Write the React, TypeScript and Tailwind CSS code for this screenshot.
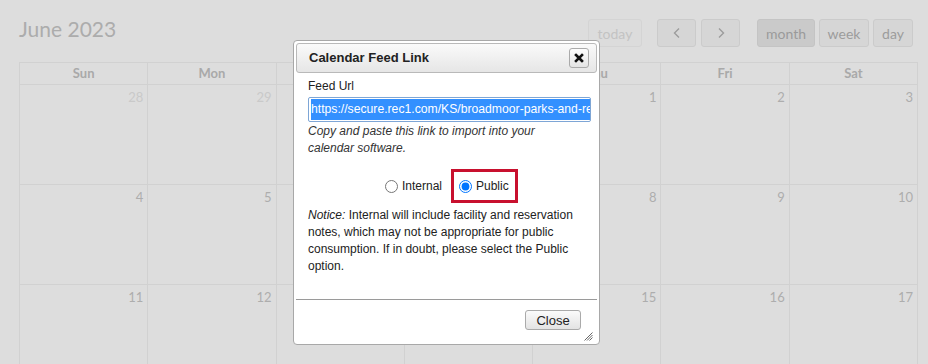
import React from 'react';

const weeks: { d: number; other?: boolean }[][] = [
  [{ d: 28, other: true }, { d: 29, other: true }, { d: 30, other: true }, { d: 31, other: true }, { d: 1 }, { d: 2 }, { d: 3 }],
  [4, 5, 6, 7, 8, 9, 10].map((d) => ({ d })),
  [11, 12, 13, 14, 15, 16, 17].map((d) => ({ d })),
];
const days = ['Sun', 'Mon', 'Tue', 'Wed', 'Thu', 'Fri', 'Sat'];

function Calendar() {
  return (
    <div className="pl-[19px] pr-[10px] pt-[19px] font-['Lato',sans-serif]">
      {/* Toolbar */}
      <div className="flex items-center h-[28px] mb-[15px]">
        <h2 className="text-[21px] leading-none text-[#acacac] -mt-[10px]">June 2023</h2>
        <div className="flex-1" />
        <button className="h-[28px] w-[54px] rounded-[3px] border border-[#d4d4d4] bg-[#dcdcdc] text-[14px] text-[#c3c3c3]">today</button>
        <div className="flex gap-[5px] ml-[15px]">
          <button className="h-[28px] w-[39px] rounded-[3px] border border-[#cbcbcb] bg-[#d6d6d6] text-[#9c9c9c] flex items-center justify-center">
            <svg width="10" height="12" viewBox="0 0 10 12" fill="none" stroke="currentColor" strokeWidth="1.4"><path d="M7 1.5 2.5 6 7 10.5" /></svg>
          </button>
          <button className="h-[28px] w-[39px] rounded-[3px] border border-[#cbcbcb] bg-[#d6d6d6] text-[#9c9c9c] flex items-center justify-center">
            <svg width="10" height="12" viewBox="0 0 10 12" fill="none" stroke="currentColor" strokeWidth="1.4"><path d="M3 1.5 7.5 6 3 10.5" /></svg>
          </button>
        </div>
        <div className="flex gap-[4px] ml-[17px] mr-[5px]">
          <button className="h-[28px] w-[58px] rounded-[3px] border border-[#c4c4c4] bg-[#cacaca] text-[14px] text-[#9a9a9a]">month</button>
          <button className="h-[28px] w-[50px] rounded-[3px] border border-[#cbcbcb] bg-[#d6d6d6] text-[14px] text-[#9c9c9c]">week</button>
          <button className="h-[28px] w-[40px] rounded-[3px] border border-[#cbcbcb] bg-[#d6d6d6] text-[14px] text-[#9c9c9c]">day</button>
        </div>
      </div>

      {/* Grid */}
      <div className="w-[899px] border-l border-t border-[#d1d1d1]">
        <div className="grid grid-cols-7 h-[22px]">
          {days.map((d) => (
            <div key={d} className="border-r border-b border-[#d1d1d1] text-center text-[13px] font-bold leading-[21px] text-[#a9a9a9]">{d}</div>
          ))}
        </div>
        {weeks.map((w, i) => (
          <div key={i} className="grid grid-cols-7 h-[100px]">
            {w.map(({ d, other }) => (
              <div key={d} className="border-r border-b border-[#d1d1d1] text-right pr-[4px] pt-[3px] text-[13px] leading-[18px]">
                <span className={other ? 'text-[#c9c9c9]' : 'text-[#adadad]'}>{d}</span>
              </div>
            ))}
          </div>
        ))}
      </div>
    </div>
  );
}

function FeedDialog() {
  return (
    <div className="absolute left-[293px] top-[40px] w-[307px] h-[305px] bg-white border border-[#a8a8a8] rounded-[4px] p-[2px] flex flex-col font-['Liberation_Sans',Arial,sans-serif] text-[#222]">
      {/* Title bar */}
      <div className="h-[30px] shrink-0 flex items-center pl-[12px] pr-[7px] rounded-[3px] border border-[#b9b9b9] bg-gradient-to-b from-[#fafafa] to-[#e6e6e6]">
        <span className="text-[13px] font-bold">Calendar Feed Link</span>
        <div className="flex-1" />
        <button className="w-[20px] h-[20px] rounded-[3px] border border-[#aaa] bg-gradient-to-b from-[#fdfdfd] to-[#e4e4e4] flex items-center justify-center">
          <svg width="10" height="10" viewBox="0 0 10 10" stroke="#111" strokeWidth="2.6" strokeLinecap="square"><path d="M2 2 8 8M8 2 2 8" /></svg>
        </button>
      </div>

      {/* Content */}
      <div className="h-[226px] shrink-0 pl-[12px] pr-[6px] pt-[5px] text-[12px] leading-[17px]">
        <div>Feed Url</div>
        <div className="mt-[2px] h-[25px] border border-[#7ea6d6] rounded-[2px] overflow-hidden whitespace-nowrap flex items-center pl-[2px]">
          <span className="bg-[#3390ff] text-white text-[12.2px] leading-[21px]">https://secure.rec1.com/KS/broadmoor-parks-and-recreation/calendar/feed</span>
        </div>
        <p className="mt-[1px] max-w-[262px] italic text-[#333]">Copy and paste this link to import into your calendar software.</p>
        <div className="mt-[12px] flex justify-center items-center pl-[4px]">
          <label className="flex items-center gap-[4px] mr-[9px]">
            <input type="radio" name="vis" className="m-0 w-[13px] h-[13px]" readOnly />
            <span>Internal</span>
          </label>
          <label className="h-[34px] w-[67px] border-[3px] border-[#c8102e] flex items-center pl-[5px] gap-[4px]">
            <input type="radio" name="vis" defaultChecked className="m-0 w-[13px] h-[13px]" />
            <span>Public</span>
          </label>
        </div>
        <p className="mt-[4px] text-[#222]">
          <i>Notice:</i> Internal will include facility and reservation notes, which may not be appropriate for public consumption. If in doubt, please select the Public option.
        </p>
      </div>

      {/* Button pane */}
      <div className="flex-1 border-t border-[#9a9a9a] relative flex justify-end items-start pt-[10px] pr-[16px]">
        <button className="w-[56px] h-[20px] rounded-[3px] border border-[#aaa] bg-gradient-to-b from-[#fbfbfb] to-[#e3e3e3] text-[13px] leading-none text-[#222]">Close</button>
        <svg className="absolute right-[4px] bottom-[1px]" width="9" height="9" viewBox="0 0 9 9" stroke="#666" strokeWidth="1">
          <path d="M8.5 0.5 0.5 8.5M8.5 3 3 8.5M8.5 5.5 5.5 8.5" />
        </svg>
      </div>
    </div>
  );
}

export default function App() {
  return (
    <div className="w-[928px] h-[364px] relative overflow-hidden bg-[#dddddd]">
      <Calendar />
      <FeedDialog />
    </div>
  );
}
